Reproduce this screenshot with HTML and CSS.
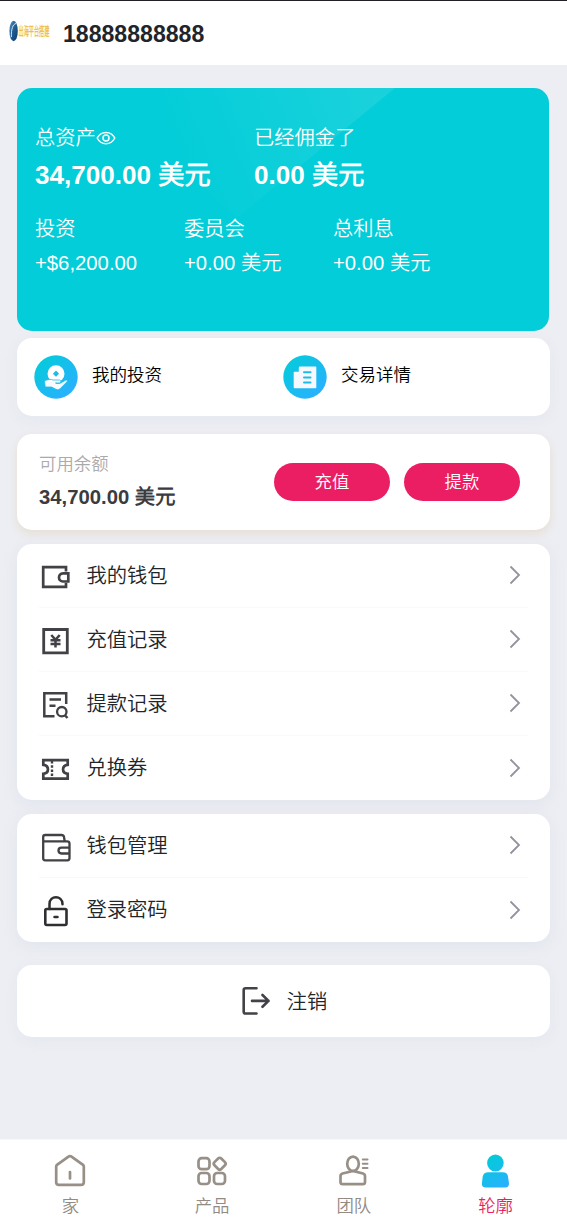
FILE: index.html
```html
<!DOCTYPE html>
<html lang="zh-CN">
<head>
<meta charset="utf-8">
<title>轮廓</title>
<link rel="stylesheet" href="styles.css">
</head>
<body>
<div class="page">
  <header class="header">
    <svg class="logo" width="42" height="22" viewBox="0 0 42 22">
      <defs><linearGradient id="globe" x1="0" y1="0" x2="1" y2="1"><stop offset="0" stop-color="#4d90bd"/><stop offset=".5" stop-color="#205b93"/><stop offset="1" stop-color="#12366e"/></linearGradient></defs>
      <ellipse cx="4.600" cy="11" rx="4.200" ry="10.200" fill="url(#globe)"/>
      <path d="M2.400 17C2 9 4 4 7 3.500" fill="none" stroke="#d5e4ef" stroke-width="1"/>
      <text class="logo-text" transform="translate(9.500 15.600) scale(.43 1)">出海平台搭建</text>
    </svg>
    <span class="phone">18888888888</span>
  </header>

  <main class="content">
    <section class="assets">
      <svg class="assets-shine" width="532" height="243" viewBox="0 0 532 243">
        <defs><linearGradient id="shine" gradientUnits="userSpaceOnUse" x1="145" y1="65" x2="345" y2="-10"><stop offset="0" stop-color="#fff" stop-opacity="0"/><stop offset="1" stop-color="#fff" stop-opacity=".09"/></linearGradient></defs>
        <path d="M378 0L220 130L65 0Z" fill="url(#shine)"/>
      </svg>
      <div class="totals">
        <div class="total">
          <div class="label">总资产<svg class="eye" width="20" height="20" viewBox="0 0 20 20" fill="none" stroke="#fff" stroke-width="1.500"><path d="M1.200 10C5 2.500 15 2.500 18.800 10C15 17.500 5 17.500 1.200 10Z"/><circle cx="10" cy="10" r="3"/></svg></div>
          <div class="amount">34,700.00 美元</div>
        </div>
        <div class="total">
          <div class="label">已经佣金了</div>
          <div class="amount">0.00 美元</div>
        </div>
      </div>
      <div class="stats">
        <div class="stat"><div class="label">投资</div><div class="value">+$6,200.00</div></div>
        <div class="stat"><div class="label">委员会</div><div class="value">+0.00 美元</div></div>
        <div class="stat"><div class="label">总利息</div><div class="value">+0.00 美元</div></div>
      </div>
    </section>

    <section class="shortcuts">
      <a class="shortcut">
        <svg width="44" height="44" viewBox="0 0 44 44">
          <defs><linearGradient id="disc" x1=".1" y1=".1" x2=".85" y2=".9"><stop offset="0" stop-color="#05cbdb"/><stop offset="1" stop-color="#29b0ff"/></linearGradient></defs>
          <circle cx="22" cy="22" r="21.700" fill="url(#disc)"/>
          <circle cx="22" cy="18.700" r="8.500" fill="#fff"/>
          <path d="M22 15.600l3.100 3.100-3.100 3.100-3.100-3.100z" fill="#16bfe6"/>
          <path d="M10.500 25.700C14 24.300 17 24 19.500 25H25.500C27.300 25.300 27.200 27.700 25.500 28H21.500C24 29 26 28.500 28 27.300L31.500 25.200C33 24.600 34 25.600 33 26.800L26 33.800C24.500 35.300 23 35 20 33.300L17.500 32H11.200Z" fill="#f7fbff" stroke="#18bdea" stroke-width=".8"/>
        </svg>
        <span>我的投资</span>
      </a>
      <a class="shortcut">
        <svg width="44" height="44" viewBox="0 0 44 44">
          <circle cx="22" cy="22" r="21.700" fill="url(#disc)"/>
          <path d="M17 11.500H32.500Q33.300 11.500 33.300 12.300V32.500Q33.300 33.300 32.500 33.300H11.500Q10.700 33.300 10.700 32.500V17.500Q10.700 16.800 11.500 16.800H15.800V12.700Q15.800 11.500 17 11.500Z" fill="#f5f8fc"/>
          <path d="M21 17.300h6.500M21 22.600h6.500M21 27.600h6.500" stroke="#1dbbea" stroke-width="2" stroke-linecap="round"/>
        </svg>
        <span>交易详情</span>
      </a>
    </section>

    <section class="balance">
      <div class="balance-info">
        <div class="balance-label">可用余额</div>
        <div class="balance-value">34,700.00 美元</div>
      </div>
      <a class="pill">充值</a>
      <a class="pill">提款</a>
    </section>

    <nav class="menu">
      <a class="row">
        <svg class="icon" width="32" height="32" viewBox="0 0 32 32"><path d="M27 10.500V6.200H4.200V25.800H27V22" stroke-width="2.700"/><path d="M29.300 12.300H24C18.700 12.300 18.700 20.500 24 20.500H29.300Z" stroke-width="2.700"/></svg>
        <span>我的钱包</span><svg class="arrow" width="12" height="20" viewBox="0 0 12 20"><path d="M1.500 1.500L10 10L1.500 18.500"/></svg>
      </a>
      <a class="row">
        <svg class="icon" width="32" height="32" viewBox="0 0 32 32"><path d="M4.700 4.500H28.300V27.800H4.700Z" stroke-width="2.800"/><path d="M12.300 10L16.500 14.800L20.700 10M11.500 15.300H21.500M11.500 19H21.500M16.500 14.500V22.500" stroke-width="2.500"/></svg>
        <span>充值记录</span><svg class="arrow" width="12" height="20" viewBox="0 0 12 20"><path d="M1.500 1.500L10 10L1.500 18.500"/></svg>
      </a>
      <a class="row">
        <svg class="icon" width="32" height="32" viewBox="0 0 32 32"><path d="M27.200 15V4.300H5.300V27.300H15.500M10.500 10.500H22M10.500 16.800H16.500" stroke-width="2.500"/><circle cx="22.800" cy="22.700" r="4.700" stroke-width="2.300"/><path d="M25.800 26.200L28.500 29" stroke-width="2.400"/></svg>
        <span>提款记录</span><svg class="arrow" width="12" height="20" viewBox="0 0 12 20"><path d="M1.500 1.500L10 10L1.500 18.500"/></svg>
      </a>
      <a class="row">
        <svg class="icon" width="32" height="32" viewBox="0 0 32 32"><path d="M4.300 6.200H28.700V10.800C22.500 11.300 22.500 19.300 28.700 19.800V24.700H4.300V19.800C10.500 19.300 10.500 11.300 4.300 10.800Z" stroke-width="2.700"/><path d="M13 7V25" stroke-width="2.400" stroke-dasharray="2.500 1.700"/></svg>
        <span>兑换券</span><svg class="arrow" width="12" height="20" viewBox="0 0 12 20"><path d="M1.500 1.500L10 10L1.500 18.500"/></svg>
      </a>
    </nav>

    <nav class="menu menu-account">
      <a class="row">
        <svg class="icon" width="32" height="32" viewBox="0 0 32 32"><path d="M4.200 10.300V6Q4.200 4 6.200 4H22.500Q24.500 4 25 6L25.700 10.300M4.200 10.300H28Q30.500 10.300 30.500 12.500V27Q30.500 29.300 28.500 29.300H6.200Q4.200 29.300 4.200 27.300Z" stroke-width="2.300"/><path d="M30 16.700H22.500C18.500 16.700 18.500 22.500 22.500 22.500H30" stroke-width="2.300"/></svg>
        <span>钱包管理</span><svg class="arrow" width="12" height="20" viewBox="0 0 12 20"><path d="M1.500 1.500L10 10L1.500 18.500"/></svg>
      </a>
      <a class="row">
        <svg class="icon icon-lock" width="32" height="32" viewBox="0 0 32 32"><rect x="6.300" y="14" width="21.200" height="16" rx="1.500" stroke-width="2.600"/><path d="M10.500 14V9C10.500 0 23.300 0 23.500 9V9.300" stroke-width="2.500"/><path d="M15.500 22H18.500" stroke-width="2.500"/></svg>
        <span>登录密码</span><svg class="arrow" width="12" height="20" viewBox="0 0 12 20"><path d="M1.500 1.500L10 10L1.500 18.500"/></svg>
      </a>
    </nav>

    <a class="logout">
      <svg width="32" height="32" viewBox="0 0 32 32" fill="none" stroke="#424247" stroke-width="2.600" stroke-linecap="round" stroke-linejoin="round"><path d="M16.500 3.300H5.500Q3.700 3.300 3.700 5V26.700Q3.700 28.500 5.500 28.500H16.500M12 15.900H28.500M22.500 10L28.500 15.900L22.500 21.800"/></svg>
      <span>注销</span>
    </a>
  </main>

  <footer class="tabs">
    <a class="tab">
      <svg width="36" height="36" viewBox="0 0 36 36"><path d="M4.200 12.500Q4.200 11.500 5 10.800L16.500 2.600Q18 1.500 19.500 2.600L31 10.800Q31.800 11.500 31.800 12.500V28.500Q31.800 30.800 29 30.800H7Q4.200 30.800 4.200 28.500Z"/><path d="M18 18V24.500"/></svg>
      <span>家</span>
    </a>
    <a class="tab">
      <svg width="36" height="36" viewBox="0 0 36 36"><rect x="4.500" y="4.200" width="11" height="11" rx="3.200"/><rect x="4.500" y="19" width="11" height="11" rx="3.200"/><rect x="20" y="19" width="11" height="11" rx="3.200"/><rect x="20.900" y="4.900" width="9.600" height="9.600" rx="2.200" transform="rotate(45 25.700 9.700)"/></svg>
      <span>产品</span>
    </a>
    <a class="tab">
      <svg width="36" height="36" viewBox="0 0 36 36"><ellipse cx="17" cy="9.800" rx="5.800" ry="7.200"/><path d="M17 17L6.500 19.500Q4.500 20.200 4.500 22.200V28Q4.500 30.200 6.700 30.200H26.800Q29 30.200 29 28V22.200Q29 20.200 27 19.500Z"/><path d="M26.800 5.500H31.500M26.800 9.800H31.500M26.800 14H31.500" stroke-width="2"/></svg>
      <span>团队</span>
    </a>
    <a class="tab tab-active">
      <svg width="36" height="36" viewBox="0 0 36 36"><defs><linearGradient id="person" gradientUnits="userSpaceOnUse" x1="9" y1="5" x2="27" y2="34"><stop offset="0" stop-color="#03cbd9"/><stop offset="1" stop-color="#2bafff"/></linearGradient></defs><g fill="url(#person)" stroke="none"><ellipse cx="17.400" cy="9" rx="8.300" ry="8.600"/><path d="M10.500 18.200H24.500Q29.500 18.200 30 22.500L31 29.500Q31 33.500 27.300 33.500H7.700Q3.700 33.500 3.900 29.500L4.700 22.500Q5.500 18.200 10.500 18.200Z"/></g></svg>
      <span>轮廓</span>
    </a>
  </footer>
</div>
</body>
</html>
```
FILE: styles.css
```css
* { box-sizing: border-box; }
body {
  margin: 0;
  background: #edeef3;
  color: #212529;
  font-family: "Liberation Sans", "Noto Sans CJK SC DemiLight", "Noto Sans CJK SC", sans-serif;
  font-weight: 350;
}
svg { display: block; flex: none; }
.page { width: 567px; height: 1227px; display: flex; flex-direction: column; }

.header {
  height: 65px;
  padding: 0 9px;
  display: flex;
  align-items: center;
  gap: 12px;
  background: #fff;
  border-top: 1px solid #202124;
}
.logo { margin-bottom: 5px; }
.logo-text { font-size: 12px; font-weight: 700; fill: #edbf51; }
.phone { padding-top: 1px; font-size: 23.1px; line-height: 30px; font-weight: 700; }

.content { flex: 1; padding: 23px 17px 0; }

.assets {
  position: relative;
  height: 243px;
  margin-right: 1px;
  padding: 34px 18px 0;
  border-radius: 15px;
  overflow: hidden;
  background: #02cdd8;
  color: #fff;
}
.assets-shine { position: absolute; top: 0; left: 0; }
.totals, .stats { position: relative; display: flex; }
.total { width: 219px; }
.label { display: flex; align-items: center; height: 31px; padding-top: 1px; font-size: 20.3px; line-height: 30px; }
.amount { height: 40px; margin-top: 2px; font-size: 26.1px; line-height: 40px; font-weight: 700; white-space: nowrap; }
.stats { margin-top: 18px; }
.stat { width: 149px; }
.value { height: 30px; margin-top: 4px; font-size: 20.3px; line-height: 30px; white-space: nowrap; }

.shortcuts {
  display: flex;
  height: 78px;
  margin-top: 7px;
  padding-left: 17px;
  border-radius: 15px;
  background: #fff;
  box-shadow: 0 4px 14px rgba(190, 205, 225, .18);
}
.shortcut { display: flex; align-items: center; gap: 14px; width: 249px; color: #000; font-size: 17.5px; }
.shortcut span { line-height: 24px; margin-bottom: 4px; }

.balance {
  display: flex;
  align-items: center;
  height: 96px;
  margin-top: 18px;
  padding: 0 30px 1px 22px;
  gap: 14px;
  border-radius: 15px;
  background: #fff;
  box-shadow: 0 4px 9px rgba(220, 200, 165, .4);
}
.balance-info { flex: 1; padding-bottom: 1px; }
.balance-label { font-size: 17.4px; line-height: 26px; color: #aaaaad; }
.balance-value { margin-top: 5px; font-size: 20.3px; line-height: 30px; font-weight: 700; color: #3b3b40; }
.pill {
  width: 116px;
  height: 38px;
  border-radius: 19px;
  background: #eb1e63;
  color: #fff;
  font-size: 17.4px;
  line-height: 38px;
  text-align: center;
}

.menu {
  margin-top: 14px;
  padding: 0 22px;
  border-radius: 15px;
  background: #fff;
  box-shadow: 0 4px 14px rgba(190, 205, 225, .25);
}
.row { display: flex; align-items: center; height: 64px; font-size: 20.3px; border-bottom: 1px solid #f8f9fa; }
.row:last-child { border-bottom: 0; }
.row span { flex: 1; margin-left: 15.500px; line-height: 30px; }
.icon { margin-top: 3px; fill: none; stroke: #414146; }
.icon-lock { stroke: #2f2f32; stroke-linecap: round; }
.arrow { margin: 0 7px 1px 0; fill: none; stroke: #92939f; stroke-width: 1.8; }
.menu-account .icon { margin-top: 2px; }

.logout {
  display: flex;
  align-items: center;
  justify-content: center;
  gap: 15px;
  height: 72px;
  margin-top: 23px;
  border-radius: 15px;
  background: #fff;
  font-size: 20.3px;
  box-shadow: 0 4px 14px rgba(190, 205, 225, .18);
}
.logout span { line-height: 30px; padding-top: 1px; }

.tabs { display: flex; height: 88px; background: #fff; border-top: 1px solid #f5f6f9; }
.tab {
  flex: 1;
  display: flex;
  flex-direction: column;
  align-items: center;
  padding: 14px 1px 0 0;
  color: #918b84;
  font-size: 17.4px;
}
.tab svg { fill: none; stroke: #989087; stroke-width: 2.7; stroke-linecap: round; }
.tab span { margin-top: 4px; line-height: 24px; }
.tab-active { color: #eb1e63; }
```
